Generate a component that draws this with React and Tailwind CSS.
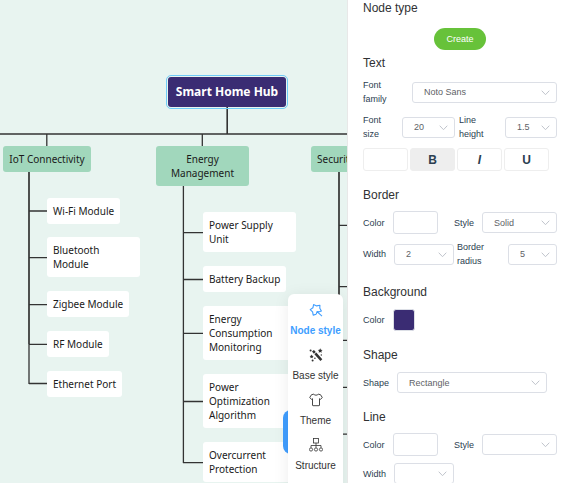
const LINE_COLOR = '#333333';

const BRANCH_NODES = [
  { label: 'IoT Connectivity', place: 'left-[3px] top-[146px] w-[88px]' },
  { label: 'Energy Management', place: 'left-[156px] top-[146px] w-[93px]' },
  { label: 'Security', place: 'left-[311px] top-[146px]' },
];

const LEAF_NODES = [
  { label: 'Wi-Fi Module', place: 'left-[47px] top-[198px]' },
  { label: 'Bluetooth Module', place: 'left-[47px] top-[237px] w-[93px]' },
  { label: 'Zigbee Module', place: 'left-[47px] top-[291px]' },
  { label: 'RF Module', place: 'left-[47px] top-[331px]' },
  { label: 'Ethernet Port', place: 'left-[47px] top-[371px]' },
  { label: 'Power Supply Unit', place: 'left-[203px] top-[212px] w-[93px]' },
  { label: 'Battery Backup', place: 'left-[203px] top-[266px]' },
  { label: 'Energy Consumption Monitoring', place: 'left-[203px] top-[306px] w-[93px]' },
  { label: 'Power Optimization Algorithm', place: 'left-[203px] top-[374px] w-[93px]' },
  { label: 'Overcurrent Protection', place: 'left-[203px] top-[442px] w-[93px]' },
];

const Connectors = () => (
  <svg className="absolute left-0 top-0" width="400" height="483" fill="none" stroke={LINE_COLOR}>
    <path strokeWidth="1.6" d="M227.2 107V134M0 134H400" />
    <path strokeWidth="1.3" d="M46.8 134V146M202.3 134V146" />
    <path strokeWidth="1.7" d="M29 172V344M339 172V483" />
    <path strokeWidth="1.3" d="M29 344V384M183.4 186V463" />
    <path
      strokeWidth="1.3"
      d="M29 211H47M29 257.7H47M29 304.6H47M29 344.3H47M29 383.5H47M183 232.6H203M183 279.5H203M183 333.4H203M183 401.5H203M183 462.6H203M339 225.3H360M339 286.6H360M339 340.4H360M339 387.3H360M339 434.2H360"
    />
  </svg>
);

const NodeStyleIcon = () => (
  <svg width="14" height="14" viewBox="0 0 14 14" fill="none" stroke="currentColor" strokeWidth="1.1" strokeLinejoin="round">
    <path d="M7.3 11.2 4.2 12.1 3.6 8.9 1.2 6.6 3.9 4.8 4.6 1.6 7.6 2.9 10.9 2.2 10.8 5.3 12.4 8 10.2 8.7" />
    <path d="M8 8.6 13 13.2M7.3 11.2 8 8.6 10.6 8.7" />
  </svg>
);

const WandIcon = () => (
  <svg width="14" height="14" viewBox="0 0 14 14" fill="currentColor">
    <path d="M3 3.6 4.9 1.9 6.8 4 4.9 5.7z" />
    <path d="M5.4 6.2 7.3 4.5 13.3 11.2 11.4 12.9z" />
    <path d="m11.2.2.7 1.5 1.7.2-1.2 1.2.3 1.7-1.5-.8-1.5.8.3-1.7L8.8 1.9l1.7-.2z" />
    <path d="m2.6 6.6.6 1.2 1.4.2-1 1 .2 1.3-1.2-.6-1.2.6.2-1.3-1-1 1.4-.2z" />
    <circle cx="1.6" cy="2.4" r="1" />
    <circle cx="5.9" cy="10.3" r=".8" />
    <circle cx="3.6" cy="12.6" r="1" />
    <circle cx="12.3" cy="7" r=".7" />
  </svg>
);

const ShirtIcon = () => (
  <svg width="14" height="14" viewBox="0 0 14 14" fill="none" stroke="currentColor" strokeWidth=".9" strokeLinejoin="round">
    <path d="M4.8 1.2C5.7 2.5 8.3 2.5 9.2 1.2L11.5 1.7 13.3 4.6 11.5 6.3 10.5 5.7V12.2Q10.5 12.7 10 12.7H4Q3.5 12.7 3.5 12.2V5.7L2.5 6.3.7 4.6 2.5 1.7Z" />
  </svg>
);

const StructureIcon = () => (
  <svg width="14" height="14" viewBox="0 0 14 14" fill="none" stroke="currentColor" strokeWidth=".8">
    <rect x="4.5" y=".5" width="5" height="4.5" />
    <path d="M7 5V9.8M2 9.8V7.5H12V9.8" />
    <circle cx="2" cy="11.5" r="1.6" />
    <circle cx="7" cy="11.5" r="1.6" />
    <circle cx="12" cy="11.5" r="1.6" />
  </svg>
);

const SIDE_TABS = [
  { label: 'Node style', icon: NodeStyleIcon, className: 'text-[#409eff] font-bold' },
  { label: 'Base style', icon: WandIcon, className: 'text-[#333333]' },
  { label: 'Theme', icon: ShirtIcon, className: 'text-[#333333]' },
  { label: 'Structure', icon: StructureIcon, className: 'text-[#333333]' },
];

const SideTabs = () => (
  <>
    <button aria-label="Collapse" className="absolute right-[49px] top-[410px] h-[44px] w-[15px] rounded-l-lg bg-[#409eff]" />
    <nav className="absolute right-[4px] top-[294px] flex h-[240px] w-[55px] flex-col rounded-md bg-white pt-[9px] shadow-[0_2px_16px_rgba(0,0,0,0.08)]">
      {SIDE_TABS.map(({ label, icon: Icon, className }) => (
        <button key={label} className={`flex h-[45px] flex-col items-center gap-[7px] whitespace-nowrap text-[10px] leading-[14px] ${className}`}>
          <Icon />
          {label}
        </button>
      ))}
    </nav>
  </>
);

const MindMap = () => (
  <main className="relative min-w-0 flex-1 overflow-hidden bg-[#e8f4f0] font-['Noto_Sans',sans-serif] text-[10px] leading-[14px] text-[#1a1a1a]">
    <Connectors />
    <div className="absolute left-[168px] top-[77px] flex h-[30px] w-[118px] items-center justify-center whitespace-nowrap rounded-[3px] bg-[#3a2c73] text-[12px] font-bold text-white outline outline-offset-1 outline-[#6fcbf7]">
      Smart Home Hub
    </div>
    {BRANCH_NODES.map(({ label, place }) => (
      <div key={label} className={`absolute rounded-[3px] bg-[#a1d7bc] px-[6px] py-[6px] text-center ${place}`}>
        {label}
      </div>
    ))}
    {LEAF_NODES.map(({ label, place }) => (
      <div key={label} className={`absolute rounded-[3px] bg-white px-[6px] py-[6px] ${place}`}>
        {label}
      </div>
    ))}
    <div className="font-['Liberation_Sans',sans-serif]">
      <SideTabs />
    </div>
  </main>
);

const Heading = ({ children }) => (
  <h2 className="text-[12px] leading-[16px] text-[#303133]">{children}</h2>
);

const SelectField = ({ id, label, value, width, labelWidth = '' }) => (
  <div className="flex items-center gap-2">
    <label htmlFor={id} className={labelWidth}>{label}</label>
    <div className={`relative ${width}`}>
      <select
        id={id}
        defaultValue={value}
        className="block h-[21px] w-full appearance-none rounded-[3px] border border-[#dcdfe6] bg-white pl-[11px] text-[9px] leading-[14px] text-[#606266]"
      >
        <option value={value}>{value}</option>
      </select>
      <svg className="pointer-events-none absolute right-[7px] top-[8px]" width="9" height="6" fill="none" stroke="#c0c4cc">
        <path d="M.7.7 4.5 4.7 8.3.7" />
      </svg>
    </div>
  </div>
);

const ColorField = ({ label, well }) => (
  <div className="flex items-center gap-2">
    <span>{label}</span>
    <button aria-label={label} className={`rounded-[3px] border border-[#dcdfe6] ${well}`} />
  </div>
);

const FORMAT_BUTTONS = [
  { name: 'Text color', text: '', className: 'bg-white' },
  { name: 'Bold', text: 'B', className: 'bg-[#eeeeee] font-bold' },
  { name: 'Italic', text: 'I', className: 'bg-white font-bold italic' },
  { name: 'Underline', text: 'U', className: 'bg-white font-bold' },
];

const StylePanel = () => (
  <aside className="w-[225px] shrink-0 overflow-hidden border-l border-[#e8e8e8] bg-white px-[15px] text-[9px] leading-[14px] text-[#2c3e50]">
    <Heading>Node type</Heading>
    <div className="mb-[5px] mt-3 flex justify-center">
      <button className="h-[22px] w-[52px] rounded-full bg-[#67c23a] text-white">Create</button>
    </div>
    <Heading>Text</Heading>
    <div className="mt-[7px] flex flex-col gap-[7px]">
      <div className="flex [&>div]:flex-1">
        <SelectField id="font-family" label="Font family" value="Noto Sans" labelWidth="w-[41px] pr-3" width="flex-1" />
      </div>
      <div className="flex justify-between">
        <SelectField id="font-size" label="Font size" value="20" labelWidth="w-[31px] pr-2" width="w-[53px]" />
        <SelectField id="line-height" label="Line height" value="1.5" labelWidth="w-[38px] pr-2" width="w-[52px]" />
      </div>
      <div className="flex gap-[2px]">
        {FORMAT_BUTTONS.map(({ name, text, className }) => (
          <button key={name} aria-label={name} className={`h-[23px] w-[45px] rounded-[3px] border border-[#eeeeee] text-[12px] ${className}`}>
            {text}
          </button>
        ))}
      </div>
    </div>

    <div className="mt-4">
      <Heading>Border</Heading>
    </div>
    <div className="mt-2 flex items-center justify-between">
      <ColorField label="Color" well="h-[23px] w-[45px] bg-white" />
      <SelectField id="border-style" label="Style" value="Solid" width="w-[75px]" />
    </div>
    <div className="mt-[6px] flex items-center justify-between">
      <SelectField id="border-width" label="Width" value="2" width="w-[60px]" />
      <SelectField id="border-radius" label="Border radius" value="5" labelWidth="w-[43px] pr-2" width="w-[49px]" />
    </div>

    <div className="mt-4">
      <Heading>Background</Heading>
    </div>
    <div className="mt-[9px]">
      <ColorField label="Color" well="size-[22px] bg-[#3a2c73]" />
    </div>

    <div className="mt-4">
      <Heading>Shape</Heading>
    </div>
    <div className="mt-[9px]">
      <SelectField id="shape" label="Shape" value="Rectangle" width="w-[150px]" />
    </div>

    <div className="mt-4">
      <Heading>Line</Heading>
    </div>
    <div className="mt-2 flex items-center justify-between">
      <ColorField label="Color" well="h-[23px] w-[45px] bg-white" />
      <SelectField id="line-style" label="Style" value="" width="w-[75px]" />
    </div>
    <div className="mt-[7px]">
      <SelectField id="line-width" label="Width" value="" width="w-[60px]" />
    </div>
  </aside>
);

const App = () => {
  return (
    <div className="flex h-screen overflow-hidden font-['Liberation_Sans',sans-serif]">
      <MindMap />
      <StylePanel />
    </div>
  );
};

export default App;
